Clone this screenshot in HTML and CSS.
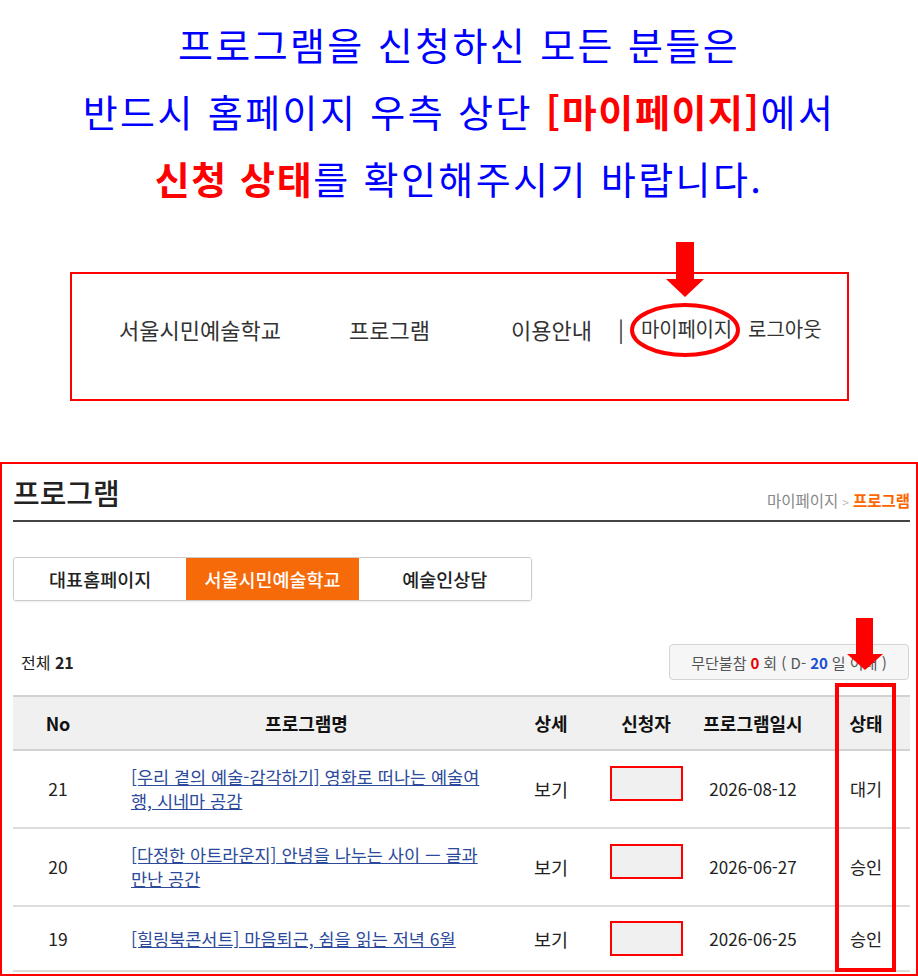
FILE: index.html
```html
<!DOCTYPE html>
<html lang="ko">
<head>
<meta charset="utf-8">
<title>마이페이지 안내</title>
<link rel="stylesheet" href="styles.css">
</head>
<body>
<div class="page">
  <section class="notice">
    <p>프로그램을 신청하신 모든 분들은</p>
    <p>반드시 홈페이지 우측 상단 <strong>[마이페이지]</strong>에서</p>
    <p><strong>신청 상태</strong>를 확인해주시기 바랍니다.</p>
  </section>

  <section class="nav-demo">
    <div class="nav-box">
      <span class="nav-item w1">서울시민예술학교</span>
      <span class="nav-item w2">프로그램</span>
      <span class="nav-item w3">이용안내</span>
      <span class="nav-sep">|</span>
      <span class="nav-item w4 my">마이페이지</span>
      <span class="nav-item out">로그아웃</span>
      <svg class="arrow arrow-nav" width="38" height="56" viewBox="0 0 38 56"><polygon points="10,0 28,0 28,37 38,37 19,55 0,37 10,37" fill="#ff0000"/></svg>
      <svg class="ring" width="110" height="54" viewBox="0 0 110 54"><ellipse cx="55" cy="27" rx="53" ry="25" fill="none" stroke="#ff0000" stroke-width="4"/></svg>
    </div>
  </section>

  <section class="screen">
    <div class="title-row">
      <h2 class="title">프로그램</h2>
      <div class="crumb"><span class="crumb-home">마이페이지</span><span class="crumb-sep">&gt;</span><span class="crumb-cur">프로그램</span></div>
    </div>

    <div class="tabs">
      <span class="tab">대표홈페이지</span>
      <span class="tab active">서울시민예술학교</span>
      <span class="tab">예술인상담</span>
    </div>

    <div class="count-row">
      <span class="total">전체 <b>21</b></span>
      <span class="absence">무단불참 <b class="red">0</b> 회 ( D- <b class="blue">20</b> 일 이내 )</span>
    </div>

    <table class="list">
      <colgroup>
        <col class="c-no"><col class="c-name"><col class="c-view"><col class="c-user"><col class="c-date"><col class="c-state">
      </colgroup>
      <thead>
        <tr><th>No</th><th>프로그램명</th><th>상세</th><th>신청자</th><th>프로그램일시</th><th class="state">상태</th></tr>
      </thead>
      <tbody>
        <tr>
          <td>21</td>
          <td class="name"><a href="#">[우리 곁의 예술-감각하기] 영화로 떠나는 예술여행, 시네마 공감</a></td>
          <td class="view">보기</td>
          <td><span class="mask up"></span></td>
          <td class="date">2026-08-12</td>
          <td class="state">대기</td>
        </tr>
        <tr>
          <td>20</td>
          <td class="name"><a href="#">[다정한 아트라운지] 안녕을 나누는 사이 — 글과 만난 공간</a></td>
          <td class="view">보기</td>
          <td><span class="mask up"></span></td>
          <td class="date">2026-06-27</td>
          <td class="state">승인</td>
        </tr>
        <tr>
          <td>19</td>
          <td class="name"><a href="#">[힐링북콘서트] 마음퇴근, 쉼을 읽는 저녁 6월</a></td>
          <td class="view">보기</td>
          <td><span class="mask"></span></td>
          <td class="date">2026-06-25</td>
          <td class="state">승인</td>
        </tr>
      </tbody>
    </table>

    <svg class="arrow arrow-state" width="36" height="53" viewBox="0 0 36 53"><polygon points="9,0 26,0 26,36 36,36 18,52 0,36 9,36" fill="#ff0000"/></svg>
    <div class="state-frame"></div>
  </section>
</div>
</body>
</html>
```

FILE: styles.css
```css
* { box-sizing: border-box; }
html, body { margin: 0; padding: 0; background: #fff; }
body { font-family: "Noto Sans CJK KR", "Noto Sans", sans-serif; color: #222; }
.page { width: 918px; }

/* notice */
.notice { padding-top: 10px; text-align: center; color: #0000ff; font-size: 38px; letter-spacing: 2.4px; }
.notice p { margin: 0; line-height: 67px; }
.notice strong { color: #ff0000; font-weight: 700; letter-spacing: 1.6px; }

/* nav demo */
.nav-demo { padding-top: 61px; }
.nav-box {
  position: relative;
  margin-left: 70px;
  width: 779px;
  height: 129px;
  border: 2px solid #ff0000;
  display: flex;
  align-items: flex-start;
  padding: 43px 0 0 47px;
  font-size: 22px;
  line-height: 24px;
  color: #333;
}
.nav-item { flex: none; }
.w1 { width: 230px; }
.w2 { width: 162px; }
.w3 { width: 107px; }
.w4 { width: 107px; }
.nav-item.my { font-size: 20px; letter-spacing: -0.2px; }
.nav-item.out { font-size: 20px; }
.nav-sep { flex: none; width: 23px; color: #333; font-size: 22px; margin-top: -1px; }
.arrow { position: absolute; display: block; }
.arrow-nav { left: 594px; top: -32px; }
.ring { position: absolute; left: 558px; top: 29px; }

/* screen */
.screen {
  position: relative;
  margin-top: 61px;
  width: 918px;
  height: 514px;
  border: 2px solid #ff0000;
  padding: 0 6px 0 11px;
}
.title-row {
  display: flex;
  justify-content: space-between;
  align-items: flex-end;
  margin-top: 8px;
  padding-bottom: 8px;
  border-bottom: 2px solid #444;
}
.title { margin: 0; font-size: 29px; line-height: 40px; font-weight: 500; color: #222; }
.crumb { font-size: 15.5px; line-height: 20px; color: #888; }
.crumb-sep { color: #bbb; margin: 0 4px; font-size: 12px; }
.crumb-cur { color: #ff6600; font-weight: 700; }

.tabs {
  margin-top: 35px;
  display: flex;
  width: 519px;
  height: 44px;
  border: 1px solid #ccc;
  border-radius: 3px;
  box-shadow: 0 1px 2px rgba(0,0,0,0.08);
  overflow: hidden;
}
.tab {
  flex: 1;
  display: flex;
  align-items: center;
  justify-content: center;
  font-size: 18.5px;
  font-weight: 500;
  color: #222;
  background: #fff;
}
.tab.active { background: #f66a0a; color: #fff; }

.count-row {
  margin-top: 43px;
  display: flex;
  justify-content: space-between;
  align-items: center;
  padding-left: 8px;
  padding-right: 1px;
}
.total { font-size: 16px; color: #222; }
.total b { font-weight: 700; }
.absence {
  height: 36px;
  width: 240px;
  display: flex;
  align-items: center;
  justify-content: center;
  gap: 4px;
  background: #f6f6f6;
  border: 1px solid #d4d4d4;
  border-radius: 4px;
  font-size: 15px;
  color: #555;
}
.absence .red { color: #e60000; }
.absence .blue { color: #1a4fd6; }

.list {
  margin-top: 15px;
  width: 897px;
  border-collapse: collapse;
  table-layout: fixed;
  font-size: 17.5px;
  color: #222;
}
.c-no { width: 90px; }
.c-name { width: 407px; }
.c-view { width: 82px; }
.c-user { width: 108px; }
.c-date { width: 106px; }
.c-state { width: 104px; }
.list thead tr { background: #f0f0f0; border-top: 2px solid #d2d2d2; border-bottom: 2px solid #d2d2d2; }
.list th { height: 54px; font-size: 18px; font-weight: 700; color: #111; text-align: center; padding: 0; }
.list td { text-align: center; padding: 14px 0; line-height: 24px; vertical-align: middle; }
.list tbody tr { border-bottom: 2px solid #ddd; }
.list .state { padding-left: 16px; }
.list td.view { font-size: 18.5px; }
.list td.date { font-size: 17px; }
.list td.name { text-align: left; padding-left: 28px; padding-right: 28px; }
.list td.name a { color: #2b4a9b; text-decoration: underline; }
.mask {
  display: inline-block;
  vertical-align: middle;
  width: 73px;
  height: 35px;
  border: 2px solid #ff0000;
  background: #f0f0f0;
}
.mask.up { margin-bottom: 12px; }

.arrow-state { left: 845px; top: 154px; }
.state-frame {
  position: absolute;
  left: 833px;
  top: 219px;
  width: 61px;
  height: 289px;
  border: 4px solid #ff0000;
}
```
